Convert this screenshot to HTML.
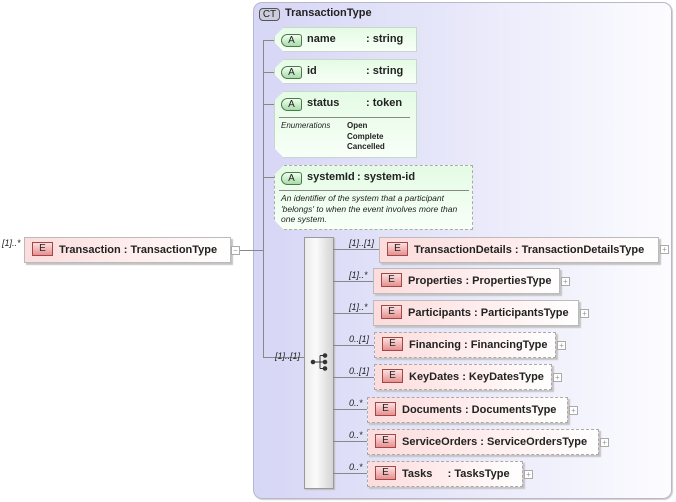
<!DOCTYPE html>
<html><head><style>
*{margin:0;padding:0;box-sizing:border-box}
body{width:676px;height:502px;background:#fff;position:relative;overflow:hidden;font-family:"Liberation Sans",sans-serif;font-size:11px;color:#222}
.a{position:absolute}
.ct{position:absolute;left:253px;top:2px;width:419px;height:497px;border:1px solid #b8b8c8;border-radius:9px;background:linear-gradient(to right,#d6d6f6 0%,#e8e8fa 50%,#fcfcff 100%);box-shadow:1px 1px 1px #ccc}
.ln{position:absolute;background:#888}
.att{position:absolute;background:linear-gradient(to bottom,#e4fbe4,#f8fff8);border:1px solid #c8d8c8;box-shadow:2px 2px 1px #c4c4c4;clip-path:polygon(10px 0,100% 0,100% 100%,10px 100%,0 calc(100% - 10px),0 10px)}
.att.d{border:1px dashed #aaa}
.ab{position:absolute;left:6px;top:6px;width:21px;height:13px;border:1px solid #4a7a4a;border-radius:7px 3px 3px 7px;background:linear-gradient(#f0fff0,#a8dca8);font-size:10px;text-align:center;line-height:12px;color:#222}
.el{position:absolute;height:26px;background:linear-gradient(to right,#fcdcdc,#fff0f0 60%,#fff);border:1px solid #bbb;box-shadow:2px 2px 1px #c4c4c4;font-weight:bold;font-size:11px;line-height:24px;white-space:pre}
.el.d{border:1px dashed #aaa}
.eb{display:inline-block;vertical-align:middle;margin:0 6px 0 7px;width:21px;height:14px;border:1px solid #a04848;background:linear-gradient(#fce0e0,#e89090);font-size:10px;font-weight:normal;text-align:center;line-height:12px;position:relative;top:-1px}
.pl{position:absolute;width:9px;height:9px;border:1px solid #aaa;background:#fff;font-size:8px;line-height:7px;text-align:center;color:#999}
.c{position:absolute;font-style:italic;font-size:9px;color:#222}
.b{font-weight:bold}
</style></head><body>
<div class="ct"></div>
<div class="a" style="left:259px;top:8px;width:21px;height:13px;border:1px solid #555;border-radius:4px;background:#ccd;font-size:10px;text-align:center;line-height:11px">CT</div>
<div class="a b" style="left:285px;top:7px;font-size:11px">TransactionType</div>

<div class="ln" style="left:263px;top:40px;width:1px;height:318px"></div>
<div class="ln" style="left:263px;top:40px;width:12px;height:1px"></div>
<div class="ln" style="left:263px;top:72px;width:12px;height:1px"></div>
<div class="ln" style="left:263px;top:104px;width:12px;height:1px"></div>
<div class="ln" style="left:263px;top:177px;width:12px;height:1px"></div>
<div class="ln" style="left:263px;top:357px;width:41px;height:1px"></div>
<div class="ln" style="left:238px;top:250px;width:26px;height:1px"></div>

<div class="att" style="left:274px;top:27px;width:143px;height:25px"><div class="ab">A</div><div class="a b" style="left:32px;top:5px">name</div><div class="a b" style="left:91px;top:5px">: string</div></div>
<div class="att" style="left:274px;top:59px;width:143px;height:25px"><div class="ab">A</div><div class="a b" style="left:32px;top:5px">id</div><div class="a b" style="left:91px;top:5px">: string</div></div>
<div class="att" style="left:274px;top:91px;width:143px;height:67px"><div class="ab">A</div><div class="a b" style="left:32px;top:5px">status</div><div class="a b" style="left:91px;top:5px">: token</div>
<div class="a" style="left:4px;top:25px;width:131px;height:1px;background:#888"></div>
<div class="a" style="left:6px;top:29px;font-size:8px;font-style:italic">Enumerations</div>
<div class="a b" style="left:72px;top:29px;font-size:8px;line-height:10.5px">Open<br>Complete<br>Cancelled</div></div>
<div class="att d" style="left:274px;top:165px;width:199px;height:65px"><div class="ab">A</div><div class="a b" style="left:32px;top:5px">systemId</div><div class="a b" style="left:82px;top:5px">: system-id</div>
<div class="a" style="left:4px;top:24px;width:190px;height:1px;background:#888"></div>
<div class="a" style="left:6px;top:27px;font-size:8.5px;font-style:italic;line-height:10.5px;white-space:nowrap">An identifier of the system that a participant<br>'belongs' to when the event involves more than<br>one system.</div></div>

<div class="c" style="left:2px;top:238px">[1]..*</div>
<div class="el" style="left:24px;top:237px;width:207px"><span class="eb">E</span>Transaction : TransactionType</div>
<div class="pl" style="left:231px;top:246px">−</div>

<div class="c" style="left:275px;top:351px">[1]..[1]</div>
<div class="a" style="left:304px;top:237px;width:30px;height:252px;border:1px solid #999;background:linear-gradient(to right,#ececec,#fafafa 40%,#d4d4d4);box-shadow:1px 1px 1px #bbb"></div>
<svg class="a" style="left:310px;top:352px" width="20" height="20" viewBox="0 0 20 20"><g fill="#333" stroke="#333"><circle cx="3" cy="10" r="1.8"/><circle cx="15" cy="3.5" r="1.8"/><circle cx="15" cy="10" r="1.8"/><circle cx="15" cy="16.5" r="1.8"/><path d="M3 10H10M10 3.5V16.5M10 3.5H15M10 10H15M10 16.5H15" fill="none"/></g></svg>

<div class="ln" style="left:333px;top:249px;width:46px;height:1px"></div>
<div class="ln" style="left:333px;top:281px;width:40px;height:1px"></div>
<div class="ln" style="left:333px;top:313px;width:40px;height:1px"></div>
<div class="ln" style="left:333px;top:345px;width:41px;height:1px"></div>
<div class="ln" style="left:333px;top:377px;width:41px;height:1px"></div>
<div class="ln" style="left:333px;top:409px;width:34px;height:1px"></div>
<div class="ln" style="left:333px;top:441px;width:34px;height:1px"></div>
<div class="ln" style="left:333px;top:473px;width:34px;height:1px"></div>

<div class="c" style="left:349px;top:238px">[1]..[1]</div>
<div class="el" style="left:379px;top:237px;width:280px"><span class="eb">E</span>TransactionDetails : TransactionDetailsType</div>
<div class="pl" style="left:660px;top:245px">+</div>
<div class="c" style="left:349px;top:270px">[1]..*</div>
<div class="el" style="left:373px;top:268px;width:187px"><span class="eb">E</span>Properties : PropertiesType</div>
<div class="pl" style="left:561px;top:277px">+</div>
<div class="c" style="left:349px;top:302px">[1]..*</div>
<div class="el" style="left:373px;top:300px;width:206px"><span class="eb">E</span>Participants : ParticipantsType</div>
<div class="pl" style="left:580px;top:309px">+</div>
<div class="c" style="left:349px;top:334px">0..[1]</div>
<div class="el d" style="left:374px;top:332px;width:182px"><span class="eb">E</span>Financing : FinancingType</div>
<div class="pl" style="left:557px;top:341px">+</div>
<div class="c" style="left:349px;top:366px">0..[1]</div>
<div class="el d" style="left:374px;top:364px;width:178px"><span class="eb">E</span>KeyDates : KeyDatesType</div>
<div class="pl" style="left:553px;top:373px">+</div>
<div class="c" style="left:349px;top:398px">0..*</div>
<div class="el d" style="left:367px;top:397px;width:201px"><span class="eb">E</span>Documents : DocumentsType</div>
<div class="pl" style="left:569px;top:406px">+</div>
<div class="c" style="left:349px;top:430px">0..*</div>
<div class="el d" style="left:367px;top:429px;width:232px"><span class="eb">E</span>ServiceOrders : ServiceOrdersType</div>
<div class="pl" style="left:600px;top:438px">+</div>
<div class="c" style="left:349px;top:462px">0..*</div>
<div class="el d" style="left:367px;top:461px;width:156px"><span class="eb">E</span>Tasks     : TasksType</div>
<div class="pl" style="left:524px;top:470px">+</div>
</body></html>
